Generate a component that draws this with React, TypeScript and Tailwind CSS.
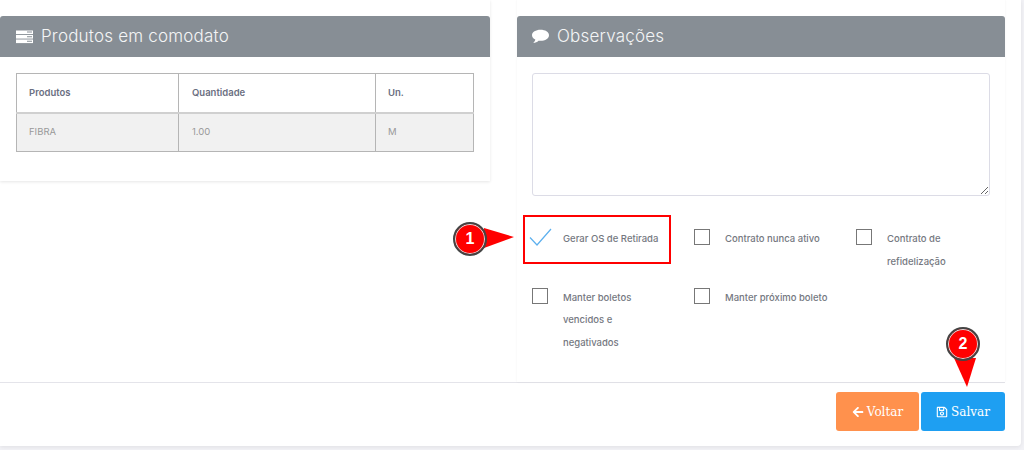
import React from "react";
import { FaArrowLeft, FaRegSave } from "react-icons/fa";

const font = "font-['Inter','Open_Sans',sans-serif]";

const ServerIcon = () => (
  <svg width="17" height="14" viewBox="0 0 17 14" fill="#fff">
    <path d="M0 0.5h17v3.6h-17z" />
    <path d="M0 5h17v3.600h-17z" />
    <path d="M0 9.500h17v3.600h-17z" />
    <path d="M11 1.600h5v1h-5zM11 6.200h5v1h-5zM11 10.700h5v1h-5z" fill="#878e95" />
  </svg>
);

const CommentIcon = () => (
  <svg width="17" height="15" viewBox="0 0 17 15" fill="#fff">
    <path d="M8.500 0.800C3.800 0.800 0 3.200 0 6.200c0 1.800 1.300 3.400 3.300 4.400-.2 1.200-.9 2.400-2 3.400 2.100-.2 3.900-1 5.200-2.300.6.100 1.300.100 2 .100 4.700 0 8.500-2.400 8.500-5.600S13.200.8 8.500.8z" />
  </svg>
);

const PanelHeader = ({ icon, title, padding }: { icon: React.ReactNode; title: string; padding: string }) => (
  <div className={`mt-4 flex h-[41px] items-center gap-[8px] rounded-t-[3px] bg-[#878e95] text-white ${padding}`}>
    {icon}
    <span className={`${font} text-[17px] font-light tracking-[0.2px] text-[#f4f5f6]`}>{title}</span>
  </div>
);

const Option = ({ checked, children }: { checked?: boolean; children: React.ReactNode }) => (
  <div className="flex items-start gap-[15px]">
    {checked ? (
      <svg width="23" height="18" viewBox="0 0 23 18" fill="none" className="ml-[-3px] mr-[-4px] mt-[-1px] shrink-0">
        <path d="M1 9.500 L8 17 L22 1" stroke="#5db0ee" strokeWidth="1.200" />
      </svg>
    ) : (
      <div className="h-[16px] w-[16px] shrink-0 border border-[#777] bg-white" />
    )}
    <div className={`${font} mt-[-1px] whitespace-nowrap text-[9.500px] font-medium leading-[22.500px] text-[#75787f]`}>{children}</div>
  </div>
);

const Callout = ({ n, className }: { n: number; className: string }) => (
  <div
    className={`absolute flex h-[34px] w-[34px] items-center justify-center rounded-full border-[2px] border-[#444] bg-[#f00] shadow-[inset_0_0_0_1px_#ddd] font-['Liberation_Sans',sans-serif] text-[16px] font-bold text-white ${className}`}
  >
    {n}
  </div>
);

export default function App() {
  return (
    <div className="relative h-[450px] w-[1024px] overflow-hidden bg-[#f2f2f6]">
      <div className="h-[446px] w-[1021px] rounded-br-[4px] bg-white shadow-[0_1px_4px_rgba(0,0,0,0.08)]">
        <div className="flex h-[382px] items-start gap-[27px]">
          {/* left panel */}
          <div className="h-[181px] w-[490px] overflow-hidden bg-white shadow-[0_1px_3px_rgba(0,0,0,0.1)]">
            <PanelHeader icon={<ServerIcon />} title="Produtos em comodato" padding="px-[16px]" />
            <div className="px-[16px] pt-[16px]">
              <table className={`${font} w-[457px] table-fixed border-collapse text-[9.500px] text-[#6b6f82]`}>
                <colgroup>
                  <col className="w-[162px]" />
                  <col className="w-[197px]" />
                  <col className="w-[98px]" />
                </colgroup>
                <thead>
                  <tr className="h-[39px]">
                    <th className="border border-[#b5b5b5] border-b-2 border-b-[#d0d0d0] pl-[12px] text-left font-semibold">Produtos</th>
                    <th className="border border-[#b5b5b5] border-b-2 border-b-[#d0d0d0] pl-[13px] text-left font-semibold">Quantidade</th>
                    <th className="border border-[#b5b5b5] border-b-2 border-b-[#d0d0d0] pl-[12px] text-left font-semibold">Un.</th>
                  </tr>
                </thead>
                <tbody>
                  <tr className="h-[39px] bg-[#f1f1f1] text-[#999]">
                    <td className="border border-[#b5b5b5] pl-[12px]">FIBRA</td>
                    <td className="border border-[#b5b5b5] pl-[13px]">1.00</td>
                    <td className="border border-[#b5b5b5] pl-[12px]">M</td>
                  </tr>
                </tbody>
              </table>
            </div>
          </div>

          {/* right panel */}
          <div className="h-[382px] w-[488px] bg-white shadow-[0_0_2px_rgba(0,0,0,0.06)]">
            <PanelHeader icon={<CommentIcon />} title="Observações" padding="px-[15px]" />
            <div className="px-[15px] pt-[16px]">
              <textarea className="block h-[123px] w-[458px] rounded-[3px] border border-[#dcdce6] bg-white" />
              <div className="mt-[33px] grid grid-cols-[162px_162px_162px] gap-y-[14.5px]">
                <Option checked>Gerar OS de Retirada</Option>
                <Option>Contrato nunca ativo</Option>
                <Option>
                  Contrato de
                  <br />
                  refidelização
                </Option>
                <Option>
                  Manter boletos
                  <br />
                  vencidos e
                  <br />
                  negativados
                </Option>
                <Option>Manter próximo boleto</Option>
              </div>
            </div>
          </div>
        </div>

        <div className="flex h-[64px] w-[1005px] justify-end gap-[2px] border-t border-[#e4e4ea] pt-[9px]">
          <button className="flex h-[39px] w-[83px] items-center justify-center gap-[3px] rounded-[3px] bg-[#ff914d] font-['DejaVu_Serif',serif] text-[12px] text-white">
            <FaArrowLeft size={12} />
            Voltar
          </button>
          <button className="flex h-[39px] w-[84px] items-center justify-center gap-[3px] rounded-[3px] bg-[#1e9ff2] font-['DejaVu_Serif',serif] text-[12px] text-white">
            <FaRegSave size={12} />
            Salvar
          </button>
        </div>
      </div>

      {/* annotations over the page */}
      <div className="absolute left-[523px] top-[215px] h-[49px] w-[148px] border-2 border-[#f00]" />
      <svg width="1024" height="450" className="pointer-events-none absolute left-0 top-0">
        <polygon points="484,228 514,237 484,248" fill="#f00" />
        <polygon points="954,358 976,358 967,387" fill="#f00" />
      </svg>
      <Callout n={1} className="left-[453px] top-[222px]" />
      <Callout n={2} className="left-[946px] top-[327px]" />
    </div>
  );
}
